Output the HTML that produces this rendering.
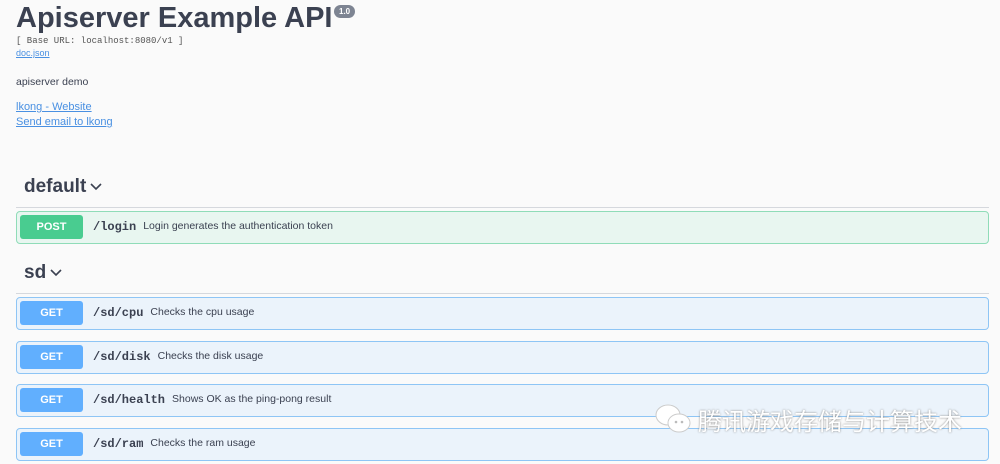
<!DOCTYPE html>
<html><head><meta charset="utf-8"><style>
body{margin:0;width:1000px;height:464px;overflow:hidden;background:#fafafa;font-family:"Liberation Sans",sans-serif;color:#3b4151;position:relative}
.a{position:absolute}
h1{position:absolute;left:16px;top:0;margin:0;font-size:29px;font-weight:bold;color:#3b4151;line-height:36px}
.badge{position:absolute;left:334px;top:5px;background:#7d8492;color:#fff;font-size:8px;font-weight:bold;border-radius:7px;padding:2px 5px;line-height:9px}
.mono{font-family:"Liberation Mono",monospace}
a{color:#4990e2;text-decoration:underline}
.sec{position:absolute;left:16px;width:973px;border-bottom:1px solid #d5d8dd;font-size:19px;font-weight:bold;height:31px;text-indent:8px}
.sec svg{vertical-align:middle;margin-left:3px}
.op{position:absolute;left:16px;width:971px;height:31px;border:1px solid;border-radius:4px}
.post{background:#e8f6f0;border-color:#8fdcb8}
.get{background:#ebf3fb;border-color:#8ec5f5}
.m{position:absolute;left:3px;top:3px;width:63px;height:24px;border-radius:3px;color:#fff;font-weight:bold;font-size:11px;text-align:center;line-height:24px}
.post .m{background:#49cc90}.get .m{background:#61affe}
.p{position:absolute;left:76px;top:8px;font-family:"Liberation Mono",monospace;font-weight:bold;font-size:12px}
.d{font-size:10.5px;font-family:"Liberation Sans",sans-serif;font-weight:normal;margin-left:7px;position:relative;top:-1px}
</style></head><body>
<h1>Apiserver Example API</h1><span class="badge">1.0</span>
<div class="a mono" style="left:16px;top:36px;font-size:9px;color:#555">[ Base URL: localhost:8080/v1 ]</div>
<a class="a" style="left:16px;top:48px;font-size:9px">doc.json</a>
<div class="a" style="left:16px;top:76px;font-size:10.5px">apiserver demo</div>
<a class="a" style="left:16px;top:101px;font-size:11px">lkong - Website</a>
<a class="a" style="left:16px;top:116px;font-size:11px">Send email to lkong</a>
<div class="sec" style="top:176px;">default<svg width="14" height="10" viewBox="0 0 14 10"><path d="M2 2l5 5 5-5" fill="none" stroke="#3b4151" stroke-width="1.6"/></svg></div>
<div class="op post" style="top:211px"><div class="m">POST</div><div class="p">/login<span class="d">Login generates the authentication token</span></div></div>
<div class="sec" style="top:262px;">sd<svg width="14" height="10" viewBox="0 0 14 10"><path d="M2 2l5 5 5-5" fill="none" stroke="#3b4151" stroke-width="1.6"/></svg></div>
<div class="op get" style="top:297px"><div class="m">GET</div><div class="p">/sd/cpu<span class="d">Checks the cpu usage</span></div></div>
<div class="op get" style="top:341px"><div class="m">GET</div><div class="p">/sd/disk<span class="d">Checks the disk usage</span></div></div>
<div class="op get" style="top:384px"><div class="m">GET</div><div class="p">/sd/health<span class="d">Shows OK as the ping-pong result</span></div></div>
<div class="op get" style="top:428px"><div class="m">GET</div><div class="p">/sd/ram<span class="d">Checks the ram usage</span></div></div>
<svg class="a" style="left:654px;top:403px" width="40" height="32" viewBox="0 0 40 32"><ellipse cx="14" cy="12" rx="12" ry="10" fill="#fff" stroke="#ccc"/><ellipse cx="25" cy="20" rx="11" ry="9" fill="#fff" stroke="#ccc"/><circle cx="22" cy="19" r="1.3" fill="#bbb"/><circle cx="28" cy="19" r="1.3" fill="#bbb"/></svg>
<div class="a" style="left:698px;top:402px;font-size:24px;color:#fff;text-shadow:0 0 2px #888;font-family:'Liberation Sans','Noto Sans CJK SC',sans-serif;letter-spacing:0">腾讯游戏存储与计算技术</div>
</body></html>
